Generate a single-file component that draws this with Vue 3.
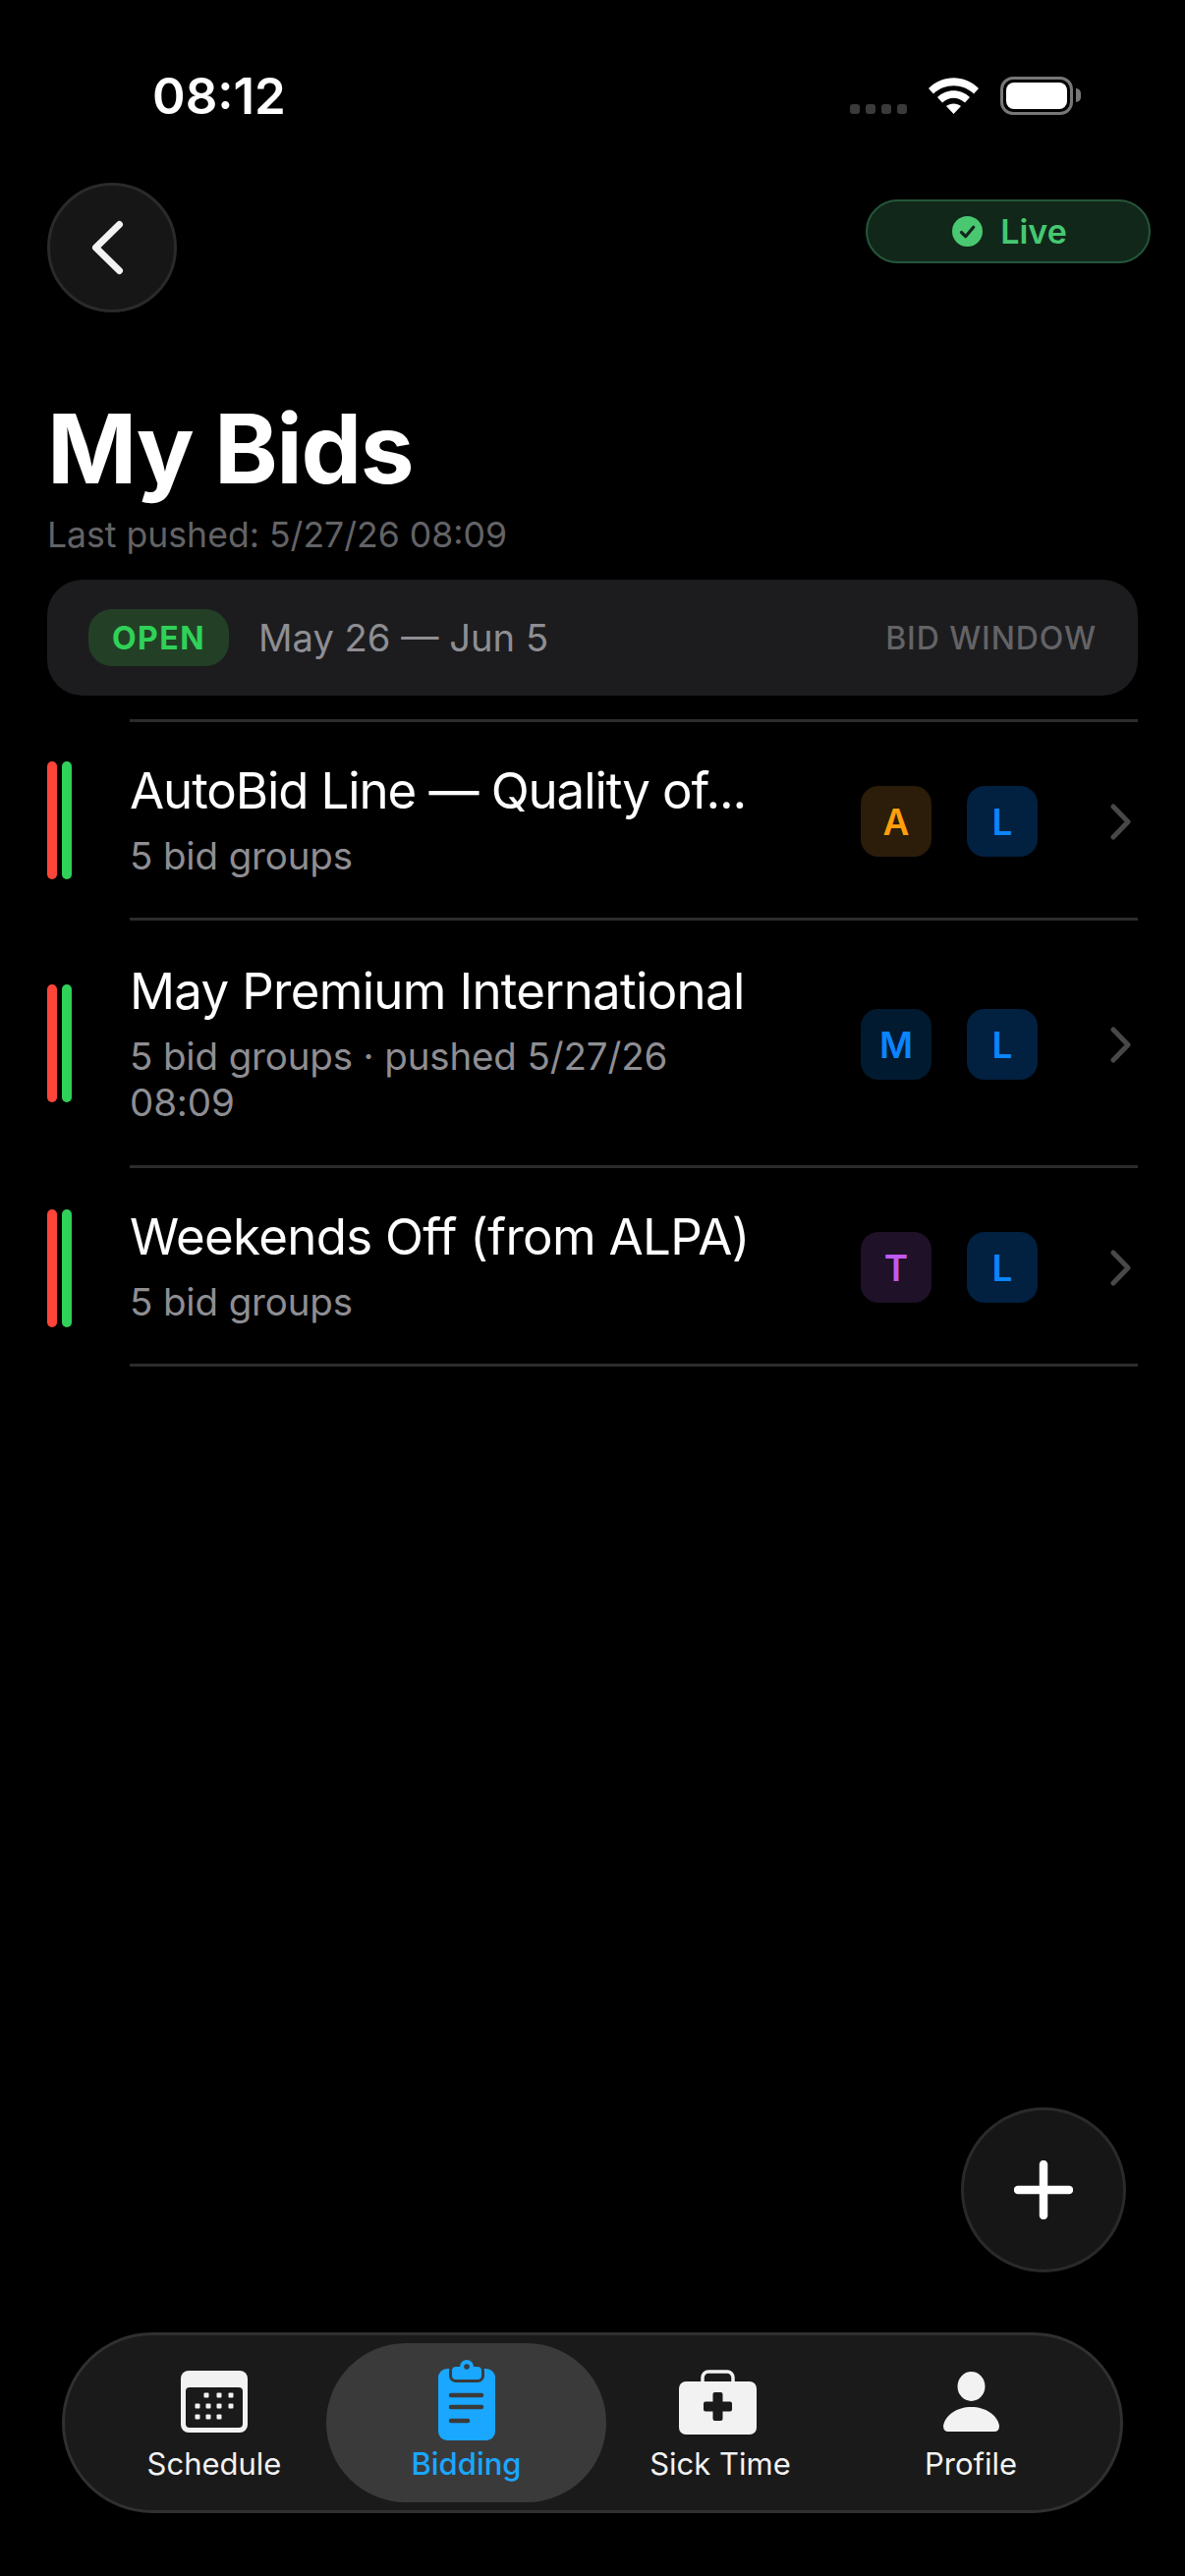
<script setup>
const rows = [
  { title: 'AutoBid Line — Quality of...', sub: '5 bid groups', badge: 'A', tone: 'amber', cls: 'short tight' },
  { title: 'May Premium International', sub: '5 bid groups · pushed 5/27/26 08:09', badge: 'M', tone: 'navy', cls: 'tall' },
  { title: 'Weekends Off (from ALPA)', sub: '5 bid groups', badge: 'T', tone: 'purple', cls: 'short' },
]
const calendarDots = [
  [26, 25], [39, 25], [51, 25],
  [17, 36], [28, 36], [39, 36], [51, 36],
  [17, 47], [28, 47], [39, 47],
]
</script>

<template>
  <div class="screen">
    <div class="status">
      <span class="time">08:12</span>
      <div class="status-icons">
        <div class="signal"><i></i><i></i><i></i><i></i></div>
        <svg class="wifi" width="51" height="37" viewBox="0 0 51 37">
          <path d="M0 11C14-3.5 37-3.5 51 11L46 16.5C35 5.5 16 5.5 5 16.5Z" fill="#fff" />
          <path d="M9 20C18 11 33 11 42 20L37 25.5C30 19 21 19 14 25.5Z" fill="#fff" />
          <path d="M18 29C22 25.5 29 25.5 33 29L25.5 37Z" fill="#fff" />
        </svg>
        <div class="battery"><div class="battery-fill"></div></div>
      </div>
    </div>

    <div class="top">
      <button class="back">
        <svg width="36" height="60" viewBox="0 0 36 60">
          <path d="M28.5 6.500 4.500 30l24 23.500" fill="none" stroke="#f2f2f2" stroke-width="7" stroke-linecap="round" stroke-linejoin="round" />
        </svg>
      </button>
      <div class="live">
        <svg width="31" height="31" viewBox="0 0 31 31">
          <circle cx="15.5" cy="15.5" r="15.5" fill="#4ac871" />
          <path d="M9.500 16.500l4.200 4.200 8-9.500" fill="none" stroke="#11271a" stroke-width="3.200" stroke-linecap="round" stroke-linejoin="round" />
        </svg>
        <span>Live</span>
      </div>
    </div>

    <h1 class="title">My Bids</h1>
    <p class="pushed">Last pushed: 5/27/26 08:09</p>

    <div class="window">
      <span class="open">OPEN</span>
      <span class="dates">May 26 — Jun 5</span>
      <span class="window-label">BID WINDOW</span>
    </div>

    <div class="list">
      <div v-for="row in rows" :key="row.title" class="row" :class="row.cls">
        <div class="bars"><i class="red"></i><i class="green"></i></div>
        <div class="row-main">
          <div class="row-body">
            <div class="row-title">{{ row.title }}</div>
            <div class="row-sub">{{ row.sub }}</div>
          </div>
          <span class="badge" :class="row.tone">{{ row.badge }}</span>
          <span class="badge blue">L</span>
          <svg class="chev" width="23" height="37" viewBox="0 0 23 37">
            <path d="M4 3l15 15.500L4 34" fill="none" stroke="#48484a" stroke-width="5" stroke-linecap="round" stroke-linejoin="round" />
          </svg>
        </div>
      </div>
    </div>

    <button class="fab">
      <svg width="60" height="60" viewBox="0 0 60 60">
        <path d="M30 4v52M4 30h52" stroke="#fff" stroke-width="8.500" stroke-linecap="round" />
      </svg>
    </button>

    <nav class="nav">
      <div class="tab">
        <div class="slot">
          <svg class="nudge" width="68" height="63" viewBox="0 0 68 63">
            <rect width="68" height="63" rx="8" fill="#f2f2f2" />
            <rect x="5" y="17" width="58" height="41" rx="4" fill="#1a1a1a" />
            <rect v-for="d in calendarDots" :key="d.join()" :x="d[0] - 2.500" :y="d[1] - 2.500" width="5" height="5" rx="1" fill="#f2f2f2" />
          </svg>
        </div>
        <span>Schedule</span>
      </div>
      <div class="tab active">
        <div class="slot">
          <svg width="58" height="82" viewBox="0 0 58 82">
            <rect y="9" width="58" height="73" rx="9" fill="#1aa7ff" />
            <rect x="11" y="4" width="36" height="19" rx="7" fill="#3a3a3a" />
            <rect x="14" y="7" width="30" height="13" rx="4" fill="#1aa7ff" />
            <circle cx="29" cy="7" r="7" fill="#1aa7ff" />
            <circle cx="29" cy="7" r="2.800" fill="#3a3a3a" />
            <path d="M13 36h31M13 48h31M13 62h17" stroke="#3a3a3a" stroke-width="4.500" stroke-linecap="round" />
          </svg>
        </div>
        <span>Bidding</span>
      </div>
      <div class="tab">
        <div class="slot">
          <svg class="nudge kit" width="79" height="66" viewBox="0 0 79 66">
            <rect x="24" y="2" width="31" height="20" rx="6" fill="none" stroke="#f2f2f2" stroke-width="3.500" />
            <rect y="12" width="79" height="54" rx="7" fill="#f2f2f2" />
            <path d="M34.500 25a2 2 0 0 1 2-2h6a2 2 0 0 1 2 2v7.500H52a2 2 0 0 1 2 2v6a2 2 0 0 1-2 2h-7.500V50a2 2 0 0 1-2 2h-6a2 2 0 0 1-2-2v-7.500H27a2 2 0 0 1-2-2v-6a2 2 0 0 1 2-2h7.500Z" fill="#1a1a1a" />
          </svg>
        </div>
        <span>Sick Time</span>
      </div>
      <div class="tab">
        <div class="slot">
          <svg class="nudge" width="57" height="61" viewBox="0 0 57 61">
            <ellipse cx="28.500" cy="15" rx="14" ry="15" fill="#f2f2f2" />
            <path d="M0 55C2 44 14 36 28.500 36S55 44 57 55Q57 61 52 61H5Q0 61 0 55Z" fill="#f2f2f2" />
          </svg>
        </div>
        <span>Profile</span>
      </div>
    </nav>
  </div>
</template>

<style>
html, body { margin: 0; background: #000; }
</style>

<style scoped>
.screen {
  position: relative;
  width: 1206px;
  height: 2622px;
  overflow: hidden;
  background: #000;
  color: #fff;
  font-family: Inter, "Noto Sans", sans-serif;
}
.status {
  display: flex;
  justify-content: space-between;
  align-items: flex-start;
  height: 186px;
  box-sizing: border-box;
  padding: 67px 114px 0 155px;
}
.time {
  font-size: 51px;
  line-height: 62px;
  font-weight: 600;
}
.status-icons {
  display: flex;
  align-items: flex-start;
  margin-top: 11px;
}
.signal {
  display: flex;
  gap: 6px;
  margin: 28px 22px 0 0;
}
.signal i {
  width: 10px;
  height: 10px;
  border-radius: 3px;
  background: #3a3a3a;
}
.wifi { margin: 1px 22px 0 0; }
.battery {
  position: relative;
  box-sizing: border-box;
  width: 74px;
  height: 39px;
  padding: 3px;
  border: 3px solid #777;
  border-radius: 13px;
}
.battery::after {
  content: "";
  position: absolute;
  right: -11px;
  top: 9px;
  width: 5px;
  height: 14px;
  border-radius: 0 6px 6px 0;
  background: #777;
}
.battery-fill {
  height: 100%;
  border-radius: 8px;
  background: #fff;
}
.top {
  display: flex;
  justify-content: space-between;
  align-items: flex-start;
  padding: 0 35px 0 48px;
}
.back {
  display: flex;
  align-items: center;
  justify-content: center;
  box-sizing: border-box;
  width: 132px;
  height: 132px;
  padding: 0 6px 0 0;
  border: 3px solid #2a2a2a;
  border-radius: 50%;
  background: #161616;
}
.live {
  display: flex;
  align-items: center;
  justify-content: center;
  gap: 18px;
  box-sizing: border-box;
  width: 290px;
  height: 65px;
  margin-top: 17px;
  padding-left: 3px;
  border: 2px solid #25563a;
  border-radius: 33px;
  background: #11271a;
  color: #46c870;
  font-size: 34px;
  font-weight: 600;
}
.title {
  margin: 79px 0 0 48px;
  font-size: 98px;
  line-height: 120px;
  font-weight: 700;
  letter-spacing: -1.5px;
}
.pushed {
  margin: 6px 0 0 48px;
  color: #636366;
  font-size: 35.6px;
  line-height: 44px;
}
.window {
  display: flex;
  align-items: center;
  box-sizing: border-box;
  height: 118px;
  margin: 23px 48px 0;
  padding: 0 42px;
  border-radius: 36px;
  background: #1c1c1e;
}
.open {
  display: flex;
  align-items: center;
  justify-content: center;
  width: 143px;
  height: 58px;
  border-radius: 24px;
  background: #234026;
  color: #30d158;
  font-size: 32px;
  font-weight: 700;
  letter-spacing: 1.5px;
}
.dates {
  margin-left: 30px;
  color: #8e8e93;
  font-size: 38.2px;
}
.window-label {
  margin-left: auto;
  color: #636366;
  font-size: 32px;
  font-weight: 500;
  letter-spacing: 0.9px;
}
.list { margin-top: 24px; }
.row {
  display: flex;
  align-items: center;
  padding: 0 48px;
}
.bars {
  display: flex;
  gap: 5px;
  width: 84px;
  margin-top: 4px;
  flex: none;
}
.bars i {
  width: 10px;
  height: 120px;
  border-radius: 5px;
}
.bars .red { background: #ff453a; }
.bars .green { background: #30d158; }
.row-main {
  display: flex;
  align-items: center;
  flex: 1;
  border-top: 3px solid #2c2c2e;
}
.row:last-child .row-main { border-bottom: 3px solid #2c2c2e; }
.short .row-main { height: 199px; }
.tall .row-main { height: 249px; }
.row-body {
  width: 650px;
  margin-right: 94px;
  flex: none;
}
.row-title {
  font-size: 51px;
  line-height: 62px;
  letter-spacing: -0.7px;
  white-space: nowrap;
}
.tight .row-title { letter-spacing: -1.1px; }
.row-sub {
  margin-top: 12px;
  color: #8e8e93;
  font-size: 38.5px;
  line-height: 47px;
  letter-spacing: -0.15px;
}
.badge {
  display: flex;
  align-items: center;
  justify-content: center;
  width: 72px;
  height: 72px;
  margin-top: 3px;
  flex: none;
  border-radius: 18px;
  font-size: 37px;
  font-weight: 600;
}
.badge + .badge { margin-left: 36px; }
.amber { background: #2b1d0a; color: #ff9f0a; }
.navy { background: #021a30; color: #0a84ff; }
.blue { background: #022040; color: #0a84ff; }
.purple { background: #1f1128; color: #bf5af2; }
.chev { margin: 3px 0 0 73px; flex: none; }
.fab {
  position: absolute;
  left: 978px;
  top: 2145px;
  display: flex;
  align-items: center;
  justify-content: center;
  box-sizing: border-box;
  width: 168px;
  height: 168px;
  padding: 0;
  border: 3px solid #2a2a2a;
  border-radius: 50%;
  background: #161616;
}
.nav {
  position: absolute;
  left: 63px;
  top: 2374px;
  display: grid;
  grid-template-columns: 228px 285px 232px 278px;
  align-items: center;
  box-sizing: border-box;
  width: 1080px;
  height: 184px;
  padding-left: 38px;
  border: 3px solid #303030;
  border-radius: 92px;
  background: #1a1a1a;
}
.tab {
  display: flex;
  flex-direction: column;
  align-items: center;
  gap: 5px;
  height: 162px;
  padding-top: 17px;
  box-sizing: border-box;
  color: #f2f2f2;
  font-size: 31px;
  line-height: 38px;
}
.slot {
  display: flex;
  align-items: center;
  justify-content: center;
  height: 82px;
}
.nudge { margin-top: 3px; }
.kit { margin-right: 5px; }
.tab.active {
  border-radius: 81px;
  background: #3a3a3a;
  color: #1aa7ff;
  font-weight: 500;
}
</style>
